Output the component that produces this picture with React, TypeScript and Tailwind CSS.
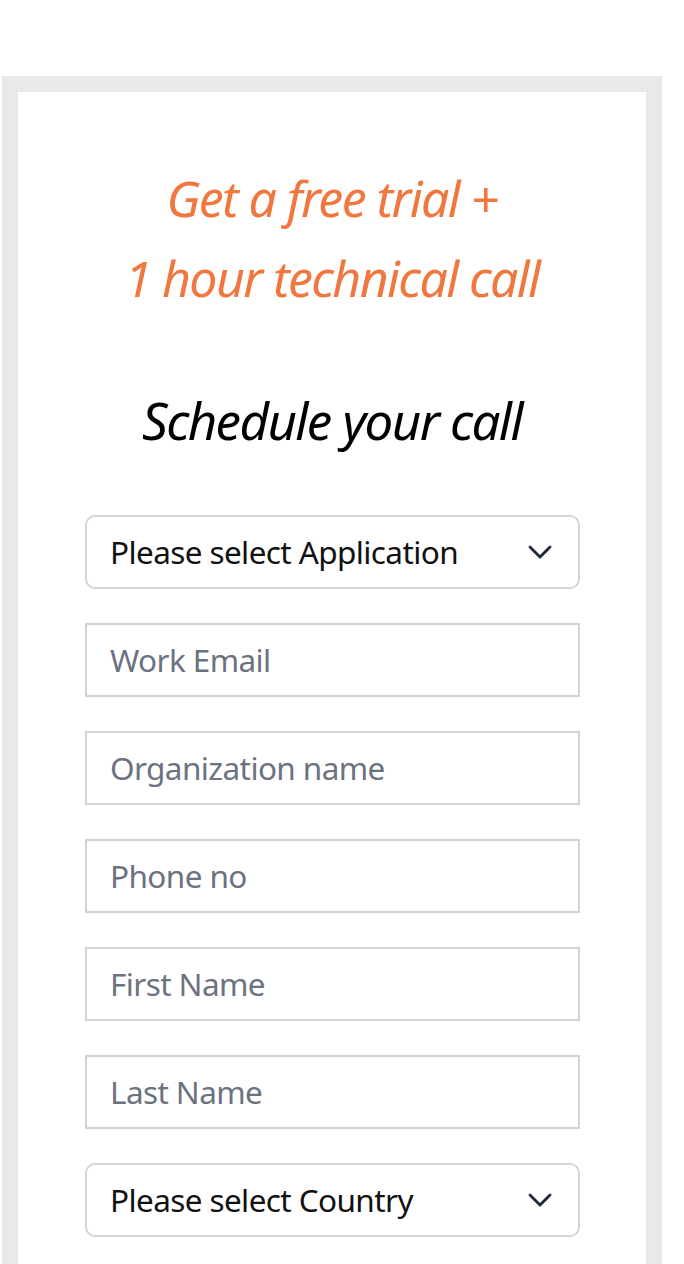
import { ChevronDown } from 'lucide-react';

const fields = [
  { type: 'select', label: 'Please select Application' },
  { type: 'input', label: 'Work Email' },
  { type: 'input', label: 'Organization name' },
  { type: 'input', label: 'Phone no' },
  { type: 'input', label: 'First Name' },
  { type: 'input', label: 'Last Name' },
  { type: 'select', label: 'Please select Country' },
];

export default function App() {
  return (
    <div className="min-h-[1264px] bg-white pt-[76px] pl-[2px] font-['Noto_Sans',sans-serif]">
      <div className="w-[660px] border-[16px] border-b-0 border-[#e9e9e9] bg-white pb-16">
        <div className="pt-[66px] text-center">
          <h1 className="text-[50px] leading-[80px] italic tracking-[-1.6px] text-[#f07840]">
            Get a free trial +
            <br />
            1 hour technical call
          </h1>
          <h2 className="mt-[72px] text-[51px] leading-[60px] italic tracking-[-1.6px] text-black">
            Schedule your call
          </h2>
        </div>

        {/* Form fields */}
        <div className="mt-[65px] flex flex-col gap-[34px] pl-[67px]">
          {fields.map((f) =>
            f.type === 'select' ? (
              <div
                key={f.label}
                className="flex h-[74px] w-[495px] items-center justify-between rounded-[10px] border-2 border-[#d1d5db] pl-[23px] pr-[18px]"
              >
                <span className="text-[31.5px] tracking-[-0.6px] text-[#111111]">{f.label}</span>
                <ChevronDown className="h-[40px] w-[40px] text-[#1f2937]" strokeWidth={1.7} />
              </div>
            ) : (
              <div
                key={f.label}
                className="flex h-[74px] w-[495px] items-center border-2 border-[#d1d5db] pl-[23px]"
              >
                <span className="text-[31.5px] tracking-[-0.6px] text-[#6b7280]">{f.label}</span>
              </div>
            )
          )}
        </div>
      </div>
    </div>
  );
}
